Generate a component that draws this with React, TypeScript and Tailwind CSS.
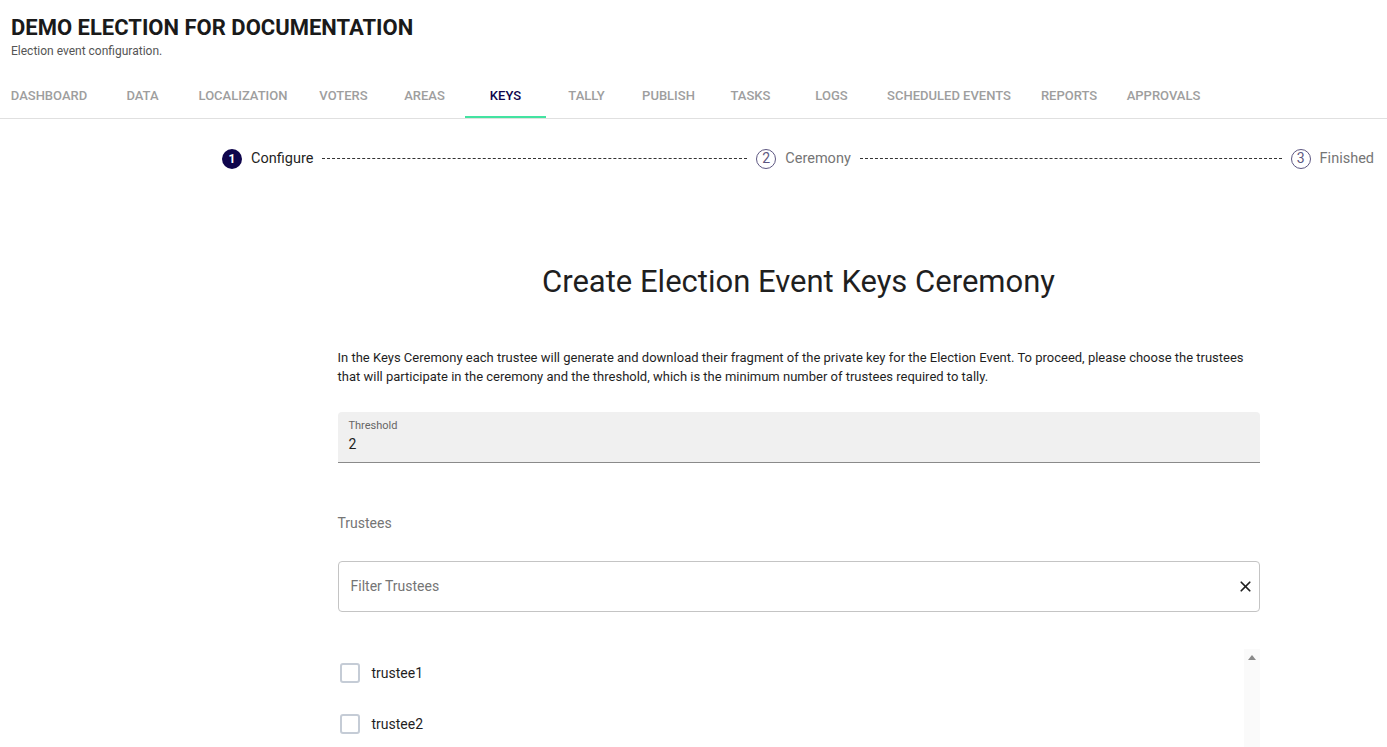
import { X } from "lucide-react";

const tabs = [
  { label: "Dashboard", width: "w-[106px]" },
  { label: "Data", width: "w-[81px]" },
  { label: "Localization", width: "w-[120px]" },
  { label: "Voters", width: "w-[81px]" },
  { label: "Areas", width: "w-[81px]" },
  { label: "Keys", width: "w-[81px]", active: true },
  { label: "Tally", width: "w-[81px]" },
  { label: "Publish", width: "w-[83px]" },
  { label: "Tasks", width: "w-[81px]" },
  { label: "Logs", width: "w-[81px]" },
  { label: "Scheduled Events", width: "w-[154px]" },
  { label: "Reports", width: "w-[86px]" },
  { label: "Approvals", width: "w-[103px]" },
];

const steps = ["Configure", "Ceremony", "Finished"];

const trustees = ["trustee1", "trustee2"];

function StepIcon({ index, active }: { index: number; active: boolean }) {
  if (active) {
    return (
      <span className="flex h-[20px] w-[20px] items-center justify-center rounded-full bg-[#0f054c] text-[12px] font-bold text-white">
        {index}
      </span>
    );
  }
  return (
    <span className="flex h-[20px] w-[20px] items-center justify-center rounded-full border border-[#5d5781] text-[14px] text-[#5d5781]">
      {index}
    </span>
  );
}

function Stepper() {
  return (
    <div className="flex items-center">
      {steps.map((step, i) => (
        <div key={step} className={i < steps.length - 1 ? "flex flex-1 items-center" : "flex items-center"}>
          <StepIcon index={i + 1} active={i === 0} />
          <span
            className={
              i === 0
                ? "ml-[9px] text-[14.5px] text-[#1f1f1f]"
                : "ml-[9px] text-[14.5px] text-[#757575]"
            }
          >
            {step}
          </span>
          {i < steps.length - 1 && (
            <span className="mx-[9px] flex-1 border-t border-dashed border-[#333]" />
          )}
        </div>
      ))}
    </div>
  );
}

export default function App() {
  return (
    <div className="min-h-[747px] bg-white font-['Roboto',sans-serif] text-[#1f1f1f]">
      <header className="px-[11px] pt-[14px]">
        <h1 className="text-[22px] font-bold leading-[28px] text-[#1a1a1a]">
          DEMO ELECTION FOR DOCUMENTATION
        </h1>
        <p className="mt-[1px] text-[12px] leading-[16px] text-[#555]">Election event configuration.</p>
      </header>

      <nav className="mt-[11px] flex h-[49px] border-b border-[#e0e0e0]">
        <div className="-ml-1 flex">
          {tabs.map((tab) => (
            <div
              key={tab.label}
              className={`${tab.width} relative flex h-[48px] shrink-0 items-center justify-center pt-[4px] text-[13px] font-medium uppercase ${
                tab.active ? "text-[#0f054c]" : "text-[#9e9e9e]"
              }`}
            >
              {tab.label}
              {tab.active && (
                <span className="absolute bottom-0 left-0 h-[2px] w-full bg-[#43e3a1]" />
              )}
            </div>
          ))}
        </div>
      </nav>

      <main className="ml-[210px]">
        <div className="pl-[12px] pr-[13px] pt-[29px]">
          <Stepper />
        </div>

        <section className="mx-auto w-[922px]">
          <h2 className="mt-[92px] text-center text-[31px] leading-[40px] text-[#1f1f1f]">
            Create Election Event Keys Ceremony
          </h2>

          <p className="mt-[46px] text-[13px] leading-[19px] text-[#1f1f1f]">
            In the Keys Ceremony each trustee will generate and download their fragment of the private key
            for the Election Event. To proceed, please choose the trustees that will participate in the
            ceremony and the threshold, which is the minimum number of trustees required to tally.
          </p>

          <div className="mt-[26px] h-[51px] rounded-t-[4px] border-b border-[#8a8a8a] bg-[#f0f0f0] px-[11px] pt-[7px]">
            <div className="text-[11px] leading-[14px] text-[#666]">Threshold</div>
            <div className="mt-[1px] text-[14px] leading-[20px] text-[#1f1f1f]">2</div>
          </div>

          <div className="mt-[50px] text-[14px] leading-[20px] text-[#757575]">Trustees</div>

          <div className="mt-[28px] flex h-[51px] items-center justify-between rounded-[4px] border border-[#c4c4c4] pl-[12px] pr-[5px]">
            <span className="text-[14px] text-[#757575]">Filter Trustees</span>
            <X className="h-[17px] w-[17px] text-[#1f1f1f]" strokeWidth={2.4} />
          </div>

          <div className="mt-[37px] flex h-[99px] overflow-hidden">
            <ul className="flex-1 pt-[14px]">
              {trustees.map((t) => (
                <li key={t} className="flex h-[51px] items-start">
                  <span className="ml-[2px] h-[20px] w-[20px] rounded-[3px] border-2 border-[#c5ccd6]" />
                  <span className="ml-[12px] text-[14px] leading-[20px] text-[#1f1f1f]">{t}</span>
                </li>
              ))}
            </ul>
            <div className="flex w-[16px] justify-center bg-[#fafafa] pt-[6px]">
              <span className="h-0 w-0 border-x-[4px] border-b-[5px] border-x-transparent border-b-[#8a8a8a]" />
            </div>
          </div>
        </section>
      </main>
    </div>
  );
}
